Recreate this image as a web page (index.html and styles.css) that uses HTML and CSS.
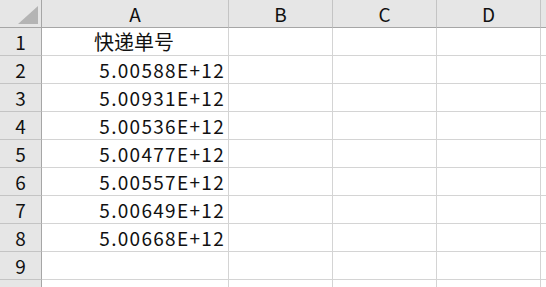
FILE: index.html
```html
<!DOCTYPE html>
<html lang="zh">
<head>
  <meta charset="UTF-8" />
  <title>快递单号</title>
  <link rel="stylesheet" href="styles.css">
</head>
<body>
  <div class="sheet">
    <div class="corner"><span class="tri"></span></div>
    <div class="col-head">A</div>
    <div class="col-head">B</div>
    <div class="col-head">C</div>
    <div class="col-head">D</div>
    <div class="col-head edge"></div>

    <div class="row-head">1</div>
    <div class="cell center">快递单号</div>
    <div class="cell"></div><div class="cell"></div><div class="cell"></div><div class="cell edge"></div>

    <div class="row-head">2</div>
    <div class="cell num">5.00588E+12</div>
    <div class="cell"></div><div class="cell"></div><div class="cell"></div><div class="cell edge"></div>

    <div class="row-head">3</div>
    <div class="cell num">5.00931E+12</div>
    <div class="cell"></div><div class="cell"></div><div class="cell"></div><div class="cell edge"></div>

    <div class="row-head">4</div>
    <div class="cell num">5.00536E+12</div>
    <div class="cell"></div><div class="cell"></div><div class="cell"></div><div class="cell edge"></div>

    <div class="row-head">5</div>
    <div class="cell num">5.00477E+12</div>
    <div class="cell"></div><div class="cell"></div><div class="cell"></div><div class="cell edge"></div>

    <div class="row-head">6</div>
    <div class="cell num">5.00557E+12</div>
    <div class="cell"></div><div class="cell"></div><div class="cell"></div><div class="cell edge"></div>

    <div class="row-head">7</div>
    <div class="cell num">5.00649E+12</div>
    <div class="cell"></div><div class="cell"></div><div class="cell"></div><div class="cell edge"></div>

    <div class="row-head">8</div>
    <div class="cell num">5.00668E+12</div>
    <div class="cell"></div><div class="cell"></div><div class="cell"></div><div class="cell edge"></div>

    <div class="row-head">9</div>
    <div class="cell"></div>
    <div class="cell"></div><div class="cell"></div><div class="cell"></div><div class="cell edge"></div>

    <div class="row-head"></div>
    <div class="cell"></div>
    <div class="cell"></div><div class="cell"></div><div class="cell"></div><div class="cell edge"></div>
  </div>
</body>
</html>
```

FILE: styles.css
```css
html, body {
  margin: 0;
  padding: 0;
  background: #fff;
  overflow: hidden;
}
.sheet {
  display: grid;
  grid-template-columns: 42px 187px 104px 104px 104px 5px;
  grid-auto-rows: 28px;
  font-family: "Noto Sans CJK SC", "Noto Sans", sans-serif;
  font-size: 19px;
  color: #111;
  height: 287px;
  overflow: hidden;
}
.sheet > div {
  box-sizing: border-box;
  line-height: 27px;
  white-space: nowrap;
}
.corner {
  position: relative;
  background: #e6e6e6;
  border-right: 1px solid #a6a6a6;
  border-bottom: 1px solid #a6a6a6;
}
.tri {
  position: absolute;
  right: 3px;
  bottom: 3px;
  width: 0;
  height: 0;
  border-left: 20px solid transparent;
  border-bottom: 18px solid #b4b4b4;
}
.col-head {
  background: #e6e6e6;
  text-align: center;
  border-right: 1px solid #c4c4c4;
  border-bottom: 1px solid #a6a6a6;
}
.row-head {
  background: #e6e6e6;
  text-align: center;
  border-right: 1px solid #a6a6a6;
  border-bottom: 1px solid #c4c4c4;
}
.cell {
  border-right: 1px solid #d4d4d4;
  border-bottom: 1px solid #d4d4d4;
}
.edge {
  border-right: none;
}
.cell.num {
  text-align: right;
  padding-right: 3px;
  letter-spacing: 1.3px;
}
.cell.center {
  text-align: center;
  font-size: 20px;
  padding-right: 2px;
}
```
